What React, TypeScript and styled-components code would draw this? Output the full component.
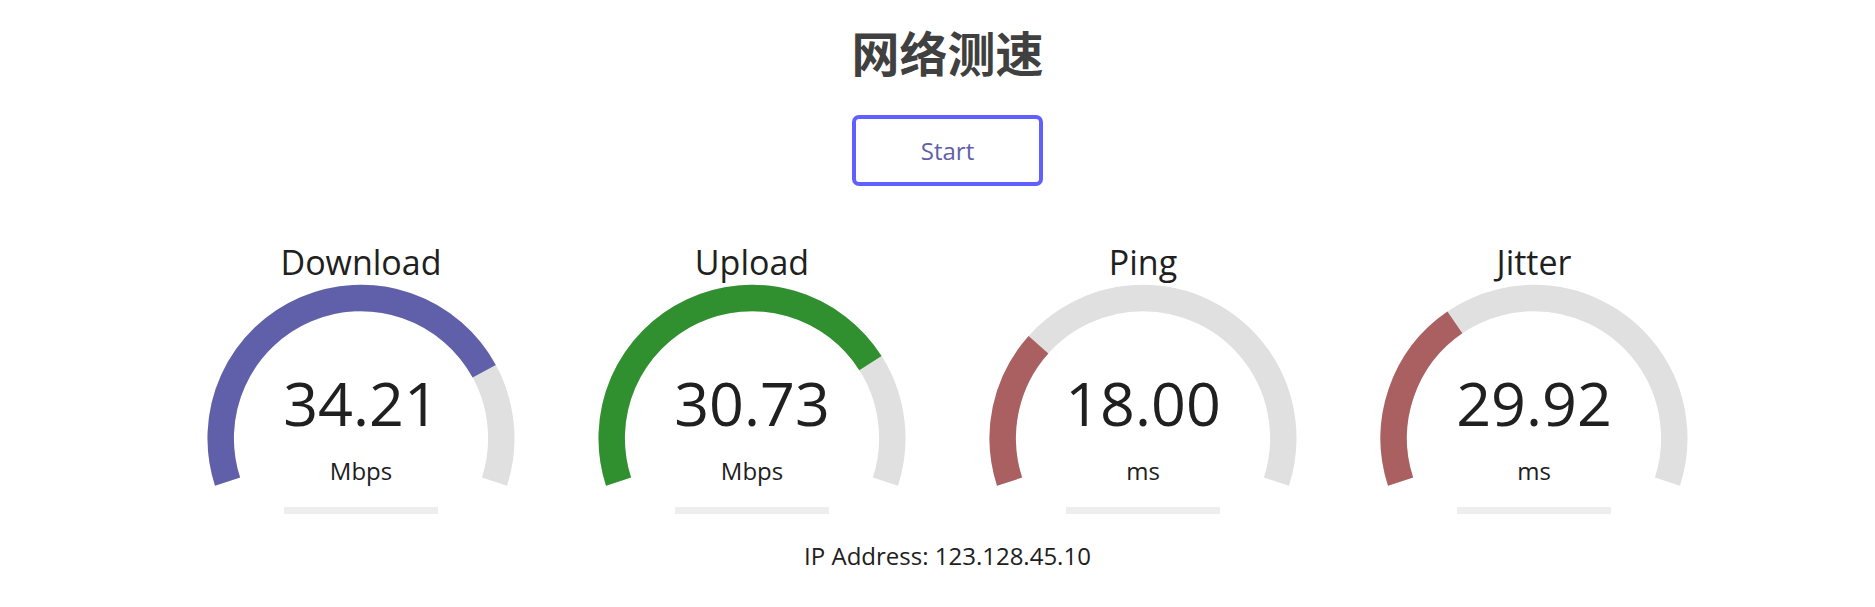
import React from "react";
import styled, { createGlobalStyle } from "styled-components";

const GlobalStyle = createGlobalStyle`
  html, body {
    margin: 0;
    padding: 0;
    background: #ffffff;
  }
  body {
    font-family: "Open Sans", "Noto Sans CJK SC", sans-serif;
    color: #202020;
  }
`;

const Page = styled.div`
  box-sizing: border-box;
  width: 100%;
  padding-left: 20px;
  display: flex;
  flex-direction: column;
  align-items: center;
  text-align: center;
`;

const Title = styled.h1`
  margin: 27px 0 0;
  font-family: "Noto Sans CJK SC", sans-serif;
  font-weight: 700;
  font-size: 48px;
  line-height: 48px;
  color: #404040;
`;

const StartButton = styled.div`
  box-sizing: border-box;
  margin-top: 40px;
  width: 191px;
  height: 71px;
  border: 4px solid #6060ff;
  border-radius: 7px;
  color: #6060aa;
  font-size: 24px;
  line-height: 63px;
  cursor: pointer;
`;

const Meters = styled.div`
  margin-top: 48px;
  display: flex;
  gap: 7px;
  justify-content: center;
`;

const TestArea = styled.div`
  position: relative;
  width: 384px;
  height: 300px;
  display: flex;
  flex-direction: column;
  align-items: center;
`;

const GaugeSvg = styled.svg`
  position: absolute;
  top: 0;
  left: 0;
  width: 384px;
  height: 300px;
  z-index: 0;
`;

const TestName = styled.div`
  position: relative;
  z-index: 1;
  margin-top: 8px;
  font-size: 34px;
  line-height: 40px;
  color: #202020;
`;

const MeterText = styled.div`
  position: relative;
  z-index: 1;
  margin-top: 91px;
  font-size: 61px;
  line-height: 60px;
  color: #202020;
`;

const Unit = styled.div`
  position: relative;
  z-index: 1;
  margin-top: 26px;
  font-size: 24px;
  line-height: 24px;
  color: #202020;
`;

const Progress = styled.div`
  position: relative;
  z-index: 1;
  margin-top: 24px;
  width: 154px;
  height: 7px;
  background: #eeeeee;
`;

const IpLine = styled.div`
  margin-top: 7px;
  font-size: 24px;
  line-height: 30px;
  color: #202020;
`;

const CX = 192;
const CY = 204.3;
const R = 140.3;
const SW = 26.4;
const START = -198;
const TOTAL = 216;

function pt(a: number) {
  const r = (a * Math.PI) / 180;
  return [CX + R * Math.cos(r), CY + R * Math.sin(r)];
}

function arc(a0: number, a1: number) {
  const [x0, y0] = pt(a0);
  const [x1, y1] = pt(a1);
  const large = a1 - a0 > 180 ? 1 : 0;
  return `M ${x0} ${y0} A ${R} ${R} 0 ${large} 1 ${x1} ${y1}`;
}

type Meter = { name: string; value: string; unit: string; amount: number; color: string };

const meters: Meter[] = [
  { name: "Download", value: "34.21", unit: "Mbps", amount: 0.7844, color: "#6060AA" },
  { name: "Upload", value: "30.73", unit: "Mbps", amount: 0.7665, color: "#309030" },
  { name: "Ping", value: "18.00", unit: "ms", amount: 0.277, color: "#AA6060" },
  { name: "Jitter", value: "29.92", unit: "ms", amount: 0.341, color: "#AA6060" },
];

function Gauge({ amount, color }: { amount: number; color: string }) {
  return (
    <GaugeSvg viewBox="0 0 384 300">
      <path d={arc(START, START + TOTAL)} fill="none" stroke="#E0E0E0" strokeWidth={SW} />
      <path d={arc(START, START + TOTAL * amount)} fill="none" stroke={color} strokeWidth={SW} />
    </GaugeSvg>
  );
}

export default function App() {
  return (
    <>
      <GlobalStyle />
      <Page>
        <Title>网络测速</Title>
        <StartButton>Start</StartButton>
        <Meters>
          {meters.map((m) => (
            <TestArea key={m.name}>
              <Gauge amount={m.amount} color={m.color} />
              <TestName>{m.name}</TestName>
              <MeterText>{m.value}</MeterText>
              <Unit>{m.unit}</Unit>
              <Progress />
            </TestArea>
          ))}
        </Meters>
        <IpLine>IP Address: 123.128.45.10</IpLine>
      </Page>
    </>
  );
}
